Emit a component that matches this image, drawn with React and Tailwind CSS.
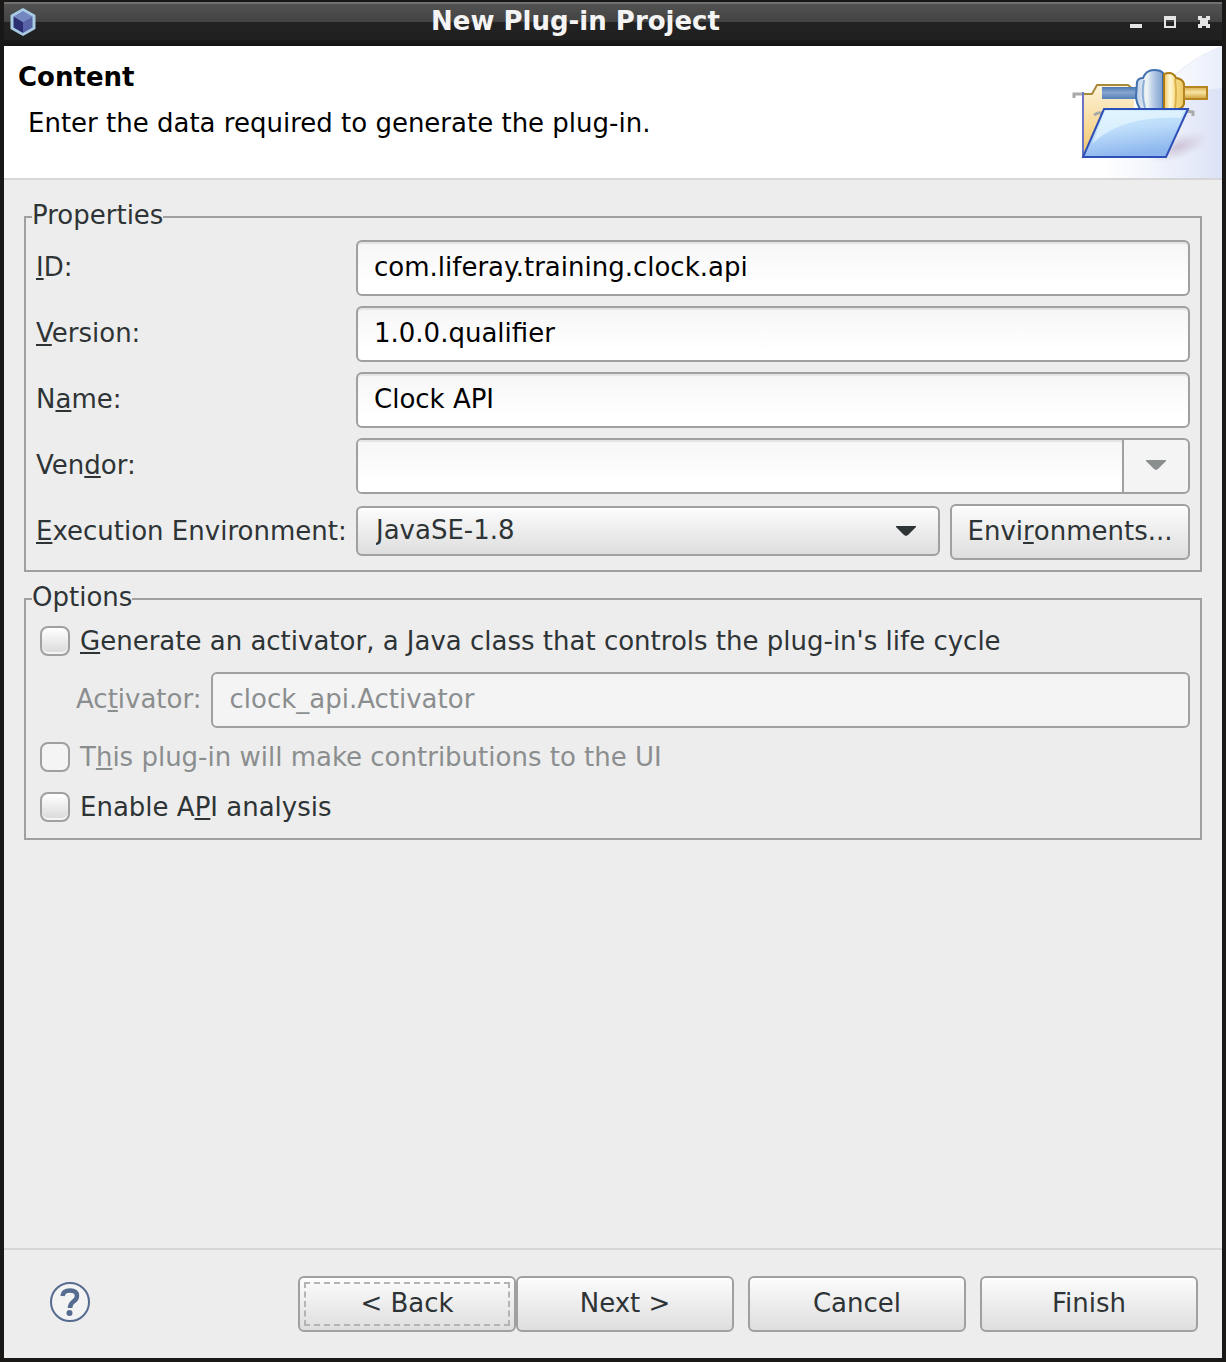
const face = "border-2 border-[#a0a0a0] rounded-md";
const raised = "bg-linear-to-b from-[#fcfcfc] to-[#dedede] shadow-[inset_0_2px_0_#ffffff]";
const sunken = "bg-linear-to-b from-[#f6f6f6] to-white to-80% shadow-[inset_0_2px_1px_#e4e4e4]";

function M({ children }) {
  return (
    <span className="underline decoration-2 underline-offset-[2px] [text-decoration-skip-ink:none]">{children}</span>
  );
}

function Arrow({ className = "" }) {
  return (
    <svg viewBox="0 0 20 10" className={`h-[10px] w-5 ${className}`} fill="currentColor" aria-hidden="true">
      <path d="M0 0H20V1L12 9L10 10L8 9L0 1Z" />
    </svg>
  );
}

function TextField({ id, label, value }) {
  return (
    <>
      <label htmlFor={id} className="pb-0.5">{label}</label>
      <input id={id} defaultValue={value} className={`${face} ${sunken} h-14 w-full min-w-0 px-4 pb-0.5 text-black outline-none`} />
    </>
  );
}

function Check({ label, disabled }) {
  return (
    <label className={`flex items-center gap-[10px] ${disabled ? "text-[#8b8e8f]" : ""}`}>
      <input
        type="checkbox"
        disabled={disabled}
        className={`size-[30px] shrink-0 appearance-none rounded-lg border-2 border-[#a0a0a0] ${disabled ? "bg-[#f4f4f4]" : "bg-linear-to-b from-white to-[#d8d8d8] shadow-[inset_0_-2px_0_#f4f4f4]"}`}
      />
      <span>{label}</span>
    </label>
  );
}

function Group({ title, children }) {
  return (
    <fieldset className="min-w-0 border-2 border-[#a0a0a0]">
      <legend className="ml-[6px] pb-1">{title}</legend>
      {children}
    </fieldset>
  );
}

function PushButton({ children, className = "", focused }) {
  return (
    <button type="button" className={`${face} ${raised} h-14 p-1 ${className}`}>
      <span className={`flex h-full w-full items-center justify-center pb-0.5 ${focused ? "border-2 border-dashed border-[#b4b4b4]" : ""}`}>
        {children}
      </span>
    </button>
  );
}

function AppIcon() {
  return (
    <svg viewBox="0 0 28 30" className="h-[30px] w-7" aria-hidden="true">
      <path d="M14 2L25.500 8.500V21.500L14 28L2.500 21.500V8.500Z" fill="#a9cbe4" stroke="#a9cbe4" strokeWidth="2" strokeLinejoin="round" />
      <path d="M14 4L23.500 9.500L14 15L4.500 9.500Z" fill="#7386c0" />
      <path d="M4.500 9.500L14 15V26L4.500 20.500Z" fill="#2c2f72" />
      <path d="M23.500 9.500L14 15V26L23.500 20.500Z" fill="#5763a6" />
    </svg>
  );
}

function Banner() {
  return (
    <svg viewBox="0 0 152 132" className="h-[132px] w-[152px]" aria-hidden="true">
      <defs>
        <linearGradient id="sky" x1="0" x2="1"><stop offset="0.15" stopColor="#e4eaf9" stopOpacity="0" /><stop offset="1" stopColor="#dbe2f6" /></linearGradient>
        <linearGradient id="glow" x1="0" x2="1"><stop offset="0" stopColor="#ffffff" stopOpacity="0.8" /><stop offset="1" stopColor="#eff3fc" stopOpacity="0.7" /></linearGradient>
        <linearGradient id="front" x1="0" y1="0" x2="0.3" y2="1"><stop offset="0" stopColor="#d3f1fe" /><stop offset="0.5" stopColor="#bcdcfa" /><stop offset="1" stopColor="#8db6ee" /></linearGradient>
        <linearGradient id="manila" x1="0" y1="0" x2="0" y2="1"><stop offset="0" stopColor="#fdf3d8" /><stop offset="1" stopColor="#f2c569" /></linearGradient>
        <linearGradient id="steel" x1="0" x2="1"><stop offset="0" stopColor="#b9cde6" /><stop offset="0.4" stopColor="#f0f6f4" /><stop offset="0.65" stopColor="#b4cae6" /><stop offset="1" stopColor="#7d9fce" /></linearGradient>
        <linearGradient id="brass" x1="0" x2="1"><stop offset="0" stopColor="#efc65c" /><stop offset="0.3" stopColor="#fff8d6" /><stop offset="0.6" stopColor="#f6dc84" /><stop offset="1" stopColor="#ecc662" /></linearGradient>
        <linearGradient id="rod" x1="0" y1="0" x2="0" y2="1"><stop offset="0" stopColor="#4a76b2" /><stop offset="0.45" stopColor="#86a6d0" /><stop offset="1" stopColor="#5580b8" /></linearGradient>
        <linearGradient id="pin" x1="0" y1="0" x2="0" y2="1"><stop offset="0" stopColor="#d8ad48" /><stop offset="0.45" stopColor="#f7e3a0" /><stop offset="1" stopColor="#cf9f38" /></linearGradient>
        <radialGradient id="shade"><stop offset="0" stopColor="#bfb0c6" stopOpacity="0.7" /><stop offset="1" stopColor="#c8bccd" stopOpacity="0" /></radialGradient>
      </defs>
      <path d="M152 0C120 12 96 32 82 60C66 90 40 112 10 132H152Z" fill="url(#sky)" />
      <path d="M152 0C124 11 104 28 92 48Q120 46 152 42Z" fill="url(#glow)" />
      <ellipse cx="108" cy="101" rx="32" ry="12" fill="url(#shade)" transform="rotate(-20 108 101)" />
      <path d="M4 52V48H14" fill="none" stroke="#a9a9a9" strokeWidth="3" />
      <path d="M13 110V48H21L27 39H59L64 45V62H34Z" fill="url(#manila)" />
      <path d="M13 48H22L27 39H58L63 43" fill="none" stroke="#a98a3c" strokeWidth="2" />
      <path d="M13 110V46" stroke="#6d74c4" strokeWidth="2" />
      <rect x="32" y="41" width="35" height="12" fill="url(#rod)" />
      <path d="M67 36Q68 32 73 32Q76 24 84 24Q91 24 93 27V63H70Q66 56 66 50Z" fill="url(#steel)" stroke="#426fae" strokeWidth="2" />
      <path d="M74 34Q71 48 75 62" fill="none" stroke="#8badd6" strokeWidth="2" />
      <path d="M94 28Q103 25 106 32Q113 33 114 38V58Q113 62 108 63H94Z" fill="url(#brass)" stroke="#ad7b14" strokeWidth="2" />
      <path d="M105 33Q107 48 105 62" fill="none" stroke="#dcb04a" strokeWidth="2" />
      <rect x="114" y="41" width="23" height="12" fill="url(#pin)" stroke="#b5851f" strokeWidth="2" />
      <path d="M24 69L28 67H34M116 65L123 66V70" fill="none" stroke="#a9a9a9" strokeWidth="3" />
      <path d="M34 63H118L96 111H13Z" fill="url(#front)" stroke="#2f4fb8" strokeWidth="2" />
      <path d="M35 65H114L111 72C70 70 40 80 22 98Z" fill="#ecfaff" opacity="0.6" />
    </svg>
  );
}

export default function App() {
  return (
    <div className="flex min-h-screen flex-col border-4 border-t-2 border-[#191816] bg-[#ededed] font-['DejaVu_Sans',sans-serif] text-[26px] leading-[30px] text-[#2e3436]">
      <header className="flex h-11 shrink-0 items-center border-t-2 border-[#707070] bg-[linear-gradient(#525252_0px,#424242_18px,#222222_18px,#202020_36px,#191919_36px,#131313_42px)] pr-3 pb-[6px] pl-[5px]">
        <AppIcon />
        <h1 className="min-w-0 flex-1 truncate pr-4 pb-0.5 text-center font-bold text-[#f4f4f4]">New Plug-in Project</h1>
        <div className="flex h-5 items-center gap-[22px] text-[#e4e4e4]">
          <button type="button" aria-label="Minimize"><svg viewBox="0 0 12 12" className="size-3" fill="currentColor"><path d="M0 8H12V12H0Z" /></svg></button>
          <button type="button" aria-label="Maximize"><svg viewBox="0 0 12 12" className="size-3" fill="currentColor"><path fillRule="evenodd" d="M0 0H12V12H0ZM2 4V10H10V4Z" /></svg></button>
          <button type="button" aria-label="Close"><svg viewBox="0 0 12 12" className="size-3" fill="currentColor"><path d="M0 0H4V2H8V0H12V4H10V8H12V12H8V10H4V12H0V8H2V4H0Z" /></svg></button>
        </div>
      </header>

      <section className="flex justify-between border-b-2 border-[#d6d6d6] bg-white text-black">
        <div className="pt-4 pl-[14px]">
          <h2 className="font-bold">Content</h2>
          <p className="mt-4 pl-[10px]">Enter the data required to generate the plug-in.</p>
        </div>
        <Banner />
      </section>

      <main className="flex flex-1 flex-col gap-[10px] px-5 pt-5">
        <Group title="Properties">
          <div className="grid grid-cols-[310px_1fr] items-center gap-[10px] px-[10px] pt-[6px] pb-[10px]">
            <TextField id="pid" label={<><M>I</M>D:</>} value="com.liferay.training.clock.api" />
            <TextField id="version" label={<><M>V</M>ersion:</>} value="1.0.0.qualifier" />
            <TextField id="name" label={<>N<M>a</M>me:</>} value="Clock API" />
            <label htmlFor="vendor" className="pb-0.5">Ven<M>d</M>or:</label>
            <div className={`${face} flex h-14 overflow-hidden bg-[#f4f4f4]`}>
              <input id="vendor" className={`${sunken} min-w-0 flex-1 px-4 outline-none`} />
              <button type="button" aria-label="Show vendors" className="flex w-[66px] items-center justify-center border-l-2 border-[#a0a0a0] pb-0.5 text-[#8b8e8f]">
                <Arrow />
              </button>
            </div>
            <label htmlFor="env" className="pb-0.5 whitespace-nowrap"><M>E</M>xecution Environment:</label>
            <div className="flex items-start gap-[10px]">
              <div className="relative min-w-0 flex-1 pt-0.5">
                <select id="env" className={`${face} ${raised} block h-[50px] w-full appearance-none px-[18px] pb-0.5 outline-none`}>
                  <option>JavaSE-1.8</option>
                </select>
                <Arrow className="pointer-events-none absolute top-[22px] right-6" />
              </div>
              <PushButton className="w-60">Envi<M>r</M>onments...</PushButton>
            </div>
          </div>
        </Group>

        <Group title="Options">
          <div className="px-[14px] pt-[10px] pb-4">
            <Check label={<><M>G</M>enerate an activator, a Java class that controls the plug-in's life cycle</>} />
            <div className="-mr-1 mt-4 flex items-center gap-[10px] pl-9 text-[#8b8e8f]">
              <label htmlFor="activator" className="pb-0.5">Ac<M>t</M>ivator:</label>
              <input id="activator" disabled defaultValue="clock_api.Activator" className={`${face} h-14 min-w-0 flex-1 bg-[#f4f4f4] px-4 pb-0.5`} />
            </div>
            <div className="mt-[14px] flex flex-col gap-5">
              <Check disabled label={<>T<M>h</M>is plug-in will make contributions to the UI</>} />
              <Check label={<>Enable A<M>P</M>I analysis</>} />
            </div>
          </div>
        </Group>
      </main>

      <footer className="flex items-center border-t-2 border-[#d6d6d6] py-[26px] pr-6 pl-[45px]">
        <button type="button" aria-label="Help" className="pb-1">
          <svg viewBox="0 0 42 42" className="size-[42px]" fill="none" stroke="#566b90">
            <circle cx="21" cy="21" r="19" fill="#f3f3f3" strokeWidth="2" />
            <path d="M13.500 15Q14 9.500 21 9.500Q28 9.500 28 15Q28 18 24.500 20.500Q21 23 21 27" strokeWidth="4.500" />
            <circle cx="20.500" cy="32" r="3" fill="#566b90" stroke="none" />
          </svg>
        </button>
        <div className="ml-auto flex gap-[14px]">
          <div className="flex">
            <PushButton focused className="w-[218px]">&lt; Back</PushButton>
            <PushButton className="w-[218px]">Next &gt;</PushButton>
          </div>
          <PushButton className="w-[218px]">Cancel</PushButton>
          <PushButton className="w-[218px]">Finish</PushButton>
        </div>
      </footer>
    </div>
  );
}
